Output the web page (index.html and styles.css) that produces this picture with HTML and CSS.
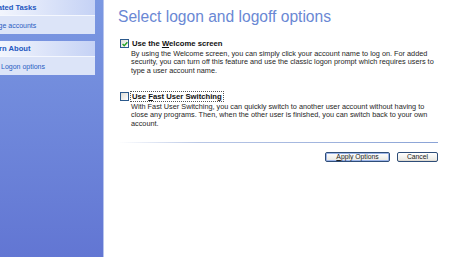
FILE: index.html
```html
<!DOCTYPE html>
<html lang="en">
<head>
    <meta charset="UTF-8">
    <title>User Accounts</title>
    <link rel="stylesheet" href="styles.css">
</head>
<body>
    <div class="sidebar">
        <div class="pane">
            <div class="pane-head">Related Tasks</div>
            <div class="pane-body">
                <span class="task-icon"></span>Manage accounts
            </div>
        </div>
        <div class="pane">
            <div class="pane-head">Learn About</div>
            <div class="pane-body">
                <span class="help-icon"></span>Logon options
            </div>
        </div>
    </div>

    <div class="main">
        <h1>Select logon and logoff options</h1>

        <div class="option">
            <div class="option-row">
                <span class="check checked">
                    <svg viewBox="0 0 8 8" width="8" height="8"><path d="M1.6 4.1 L3.2 5.7 L6.4 2.3" fill="none" stroke="#21a121" stroke-width="1.4"/></svg>
                </span>
                <span class="label">Use the <u>W</u>elcome screen</span>
            </div>
            <p class="desc">By using the Welcome screen, you can simply click your account name to log on. For added security, you can turn off this feature and use the classic logon prompt which requires users to type a user account name.</p>
        </div>

        <div class="option second">
            <div class="option-row">
                <span class="check"></span>
                <span class="label focused">Use <u>F</u>ast User Switching</span>
            </div>
            <p class="desc">With Fast User Switching, you can quickly switch to another user account without having to close any programs. Then, when the other user is finished, you can switch back to your own account.</p>
        </div>

        <div class="divider"></div>

        <div class="buttons">
            <button class="btn default"><u>A</u>pply Options</button>
            <button class="btn">Cancel</button>
        </div>
    </div>
</body>
</html>
```

FILE: styles.css
```css
html, body {
    height: 100%;
    overflow: hidden;
}
body {
    margin: 0;
    display: flex;
    font-family: "Liberation Sans", Arial, sans-serif;
    background-color: #ffffff;
}
.sidebar {
    width: 103px;
    flex-shrink: 0;
    background: linear-gradient(to bottom, #7b98e2, #6276d3);
    border-right: 1px solid #b7c5ee;
    overflow: hidden;
}
.pane {
    width: 95px;
    margin-bottom: 7px;
    overflow: hidden;
}
.pane-head {
    height: 15px;
    line-height: 15px;
    font-size: 7.6px;
    font-weight: bold;
    color: #2458c0;
    white-space: nowrap;
    text-indent: -14px;
    background: linear-gradient(to right, #f2f5fd, #c5d2f5);
}
.pane-head + .pane-body {
    border-top: 1px solid #f4f7fe;
}
.pane-body {
    height: 17px;
    padding-top: 1px;
    line-height: 17px;
    font-size: 7px;
    color: #2a5cc2;
    white-space: nowrap;
    background-color: #dce4f8;
    display: flex;
    align-items: center;
}
.task-icon {
    width: 10px;
    height: 10px;
    margin-left: -34px;
    margin-right: 5px;
    flex-shrink: 0;
}
.help-icon {
    width: 10px;
    height: 10px;
    margin-left: -13px;
    margin-right: 4px;
    flex-shrink: 0;
    background-color: #5a8ad8;
    border-radius: 50%;
}
.main {
    flex: 1;
    padding: 0 12px 0 14px;
}
h1 {
    margin: 8px 0 0;
    font-size: 15.6px;
    line-height: 18px;
    font-weight: normal;
    color: #6a88d4;
}
.option {
    margin: 13px 0 0 2px;
}
.option.second {
    margin-top: 17px;
}
.option-row {
    display: flex;
    align-items: center;
    height: 9px;
}
.check {
    width: 7px;
    height: 7px;
    border: 1px solid #2c5a8c;
    background: linear-gradient(135deg, #dcdcd6, #ffffff);
    margin-right: 2px;
    display: flex;
}
.check svg {
    margin: -0.5px;
}
.label {
    font-size: 7.7px;
    font-weight: bold;
    color: #111;
    line-height: 9px;
    padding: 0 1px;
}
.label.focused {
    outline: 1px dotted #555;
}
.desc {
    margin: 1.5px 0 0 11px;
    font-size: 7.3px;
    line-height: 8.5px;
    color: #262626;
}
.divider {
    margin-top: 14px;
    height: 1px;
    background: linear-gradient(to right, #ffffff, #b9c7e6 25%, #8aa3d6);
}
.buttons {
    display: flex;
    justify-content: flex-end;
    gap: 7px;
    margin-top: 9px;
}
.btn {
    height: 10px;
    padding: 0;
    font-family: "Liberation Sans", Arial, sans-serif;
    font-size: 6.8px;
    line-height: 8px;
    color: #222;
    border: 1px solid #2e4d78;
    border-radius: 2px;
    background: linear-gradient(to bottom, #ffffff, #ecebe6 85%, #d6d0c5);
}
.btn.default {
    width: 65px;
    box-shadow: inset 0 0 0 1px #9db5e8;
}
.btn:last-child {
    width: 41px;
}
```
